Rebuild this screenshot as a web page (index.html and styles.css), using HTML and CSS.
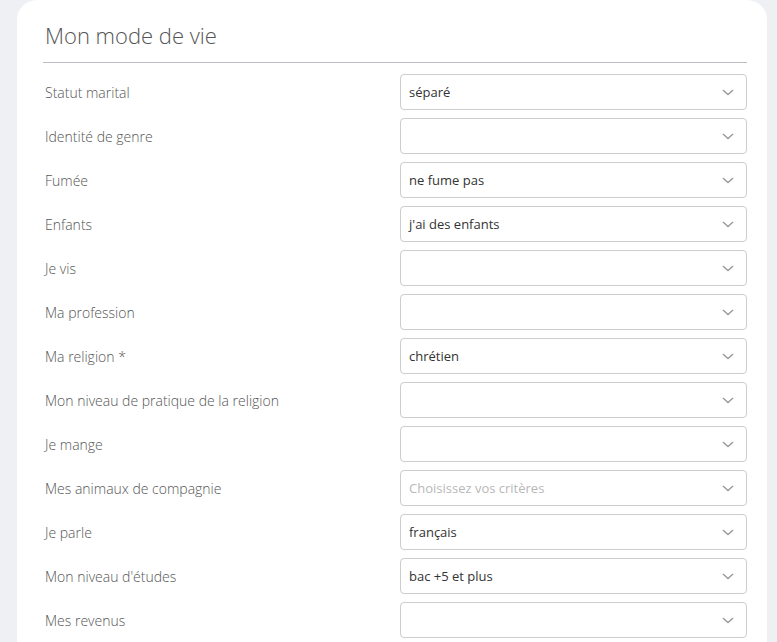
FILE: index.html
```html
<!DOCTYPE html>
<html lang="fr">
<head>
<meta charset="utf-8">
<title>Mon mode de vie</title>
<link rel="stylesheet" href="styles.css">
</head>
<body>
<div class="page">
  <section class="card">
    <h2 class="card-title">Mon mode de vie</h2>
    <div class="form">
      <div class="row"><label class="label">Statut marital</label><div class="select"><span class="value">séparé</span><svg class="chev" viewBox="0 0 12 7"><path d="M1 1l5 4.5L11 1"/></svg></div></div>
      <div class="row"><label class="label">Identité de genre</label><div class="select"><span class="value"></span><svg class="chev" viewBox="0 0 12 7"><path d="M1 1l5 4.5L11 1"/></svg></div></div>
      <div class="row"><label class="label">Fumée</label><div class="select"><span class="value">ne fume pas</span><svg class="chev" viewBox="0 0 12 7"><path d="M1 1l5 4.5L11 1"/></svg></div></div>
      <div class="row"><label class="label">Enfants</label><div class="select"><span class="value">j'ai des enfants</span><svg class="chev" viewBox="0 0 12 7"><path d="M1 1l5 4.5L11 1"/></svg></div></div>
      <div class="row"><label class="label">Je vis</label><div class="select"><span class="value"></span><svg class="chev" viewBox="0 0 12 7"><path d="M1 1l5 4.5L11 1"/></svg></div></div>
      <div class="row"><label class="label">Ma profession</label><div class="select"><span class="value"></span><svg class="chev" viewBox="0 0 12 7"><path d="M1 1l5 4.5L11 1"/></svg></div></div>
      <div class="row"><label class="label">Ma religion *</label><div class="select"><span class="value">chrétien</span><svg class="chev" viewBox="0 0 12 7"><path d="M1 1l5 4.5L11 1"/></svg></div></div>
      <div class="row"><label class="label">Mon niveau de pratique de la religion</label><div class="select"><span class="value"></span><svg class="chev" viewBox="0 0 12 7"><path d="M1 1l5 4.5L11 1"/></svg></div></div>
      <div class="row"><label class="label">Je mange</label><div class="select"><span class="value"></span><svg class="chev" viewBox="0 0 12 7"><path d="M1 1l5 4.5L11 1"/></svg></div></div>
      <div class="row"><label class="label">Mes animaux de compagnie</label><div class="select"><span class="value placeholder">Choisissez vos critères</span><svg class="chev" viewBox="0 0 12 7"><path d="M1 1l5 4.5L11 1"/></svg></div></div>
      <div class="row"><label class="label">Je parle</label><div class="select"><span class="value">français</span><svg class="chev" viewBox="0 0 12 7"><path d="M1 1l5 4.5L11 1"/></svg></div></div>
      <div class="row"><label class="label">Mon niveau d'études</label><div class="select"><span class="value">bac +5 et plus</span><svg class="chev" viewBox="0 0 12 7"><path d="M1 1l5 4.5L11 1"/></svg></div></div>
      <div class="row"><label class="label">Mes revenus</label><div class="select"><span class="value"></span><svg class="chev" viewBox="0 0 12 7"><path d="M1 1l5 4.5L11 1"/></svg></div></div>
    </div>
  </section>
</div>
</body>
</html>
```
FILE: styles.css
```css
html, body {
  margin: 0;
  padding: 0;
  background: #eef0f4;
  font-family: "Open Sans", "Noto Sans", sans-serif;
  overflow: hidden;
}
.page {
  padding-left: 17px;
}
.card {
  width: 750px;
  box-sizing: border-box;
  background: #ffffff;
  border-radius: 20px 20px 0 0;
  padding: 19px 20px 20px 26px;
}
.card-title {
  margin: 0;
  padding: 0 0 11px 2px;
  font-size: 22px;
  line-height: 32px;
  font-weight: 300;
  color: #555555;
  border-bottom: 1px solid #bcbcc2;
}
.form {
  display: flex;
  flex-direction: column;
  gap: 8px;
  padding-top: 11px;
}
.row {
  display: grid;
  grid-template-columns: 357px 1fr;
  align-items: center;
}
.label {
  padding-left: 2px;
  font-size: 14px;
  font-weight: 300;
  color: #555555;
}
.select {
  height: 36px;
  box-sizing: border-box;
  border: 1px solid #cdcdcd;
  border-radius: 4px;
  display: flex;
  align-items: center;
  justify-content: space-between;
  padding: 0 12px 0 8px;
  background: #fff;
}
.value {
  font-size: 13px;
  color: #333333;
}
.value.placeholder {
  color: #b8b8b8;
}
.chev {
  width: 12px;
  height: 7px;
  fill: none;
  stroke: #9a9a9a;
  stroke-width: 1.4;
}
```
